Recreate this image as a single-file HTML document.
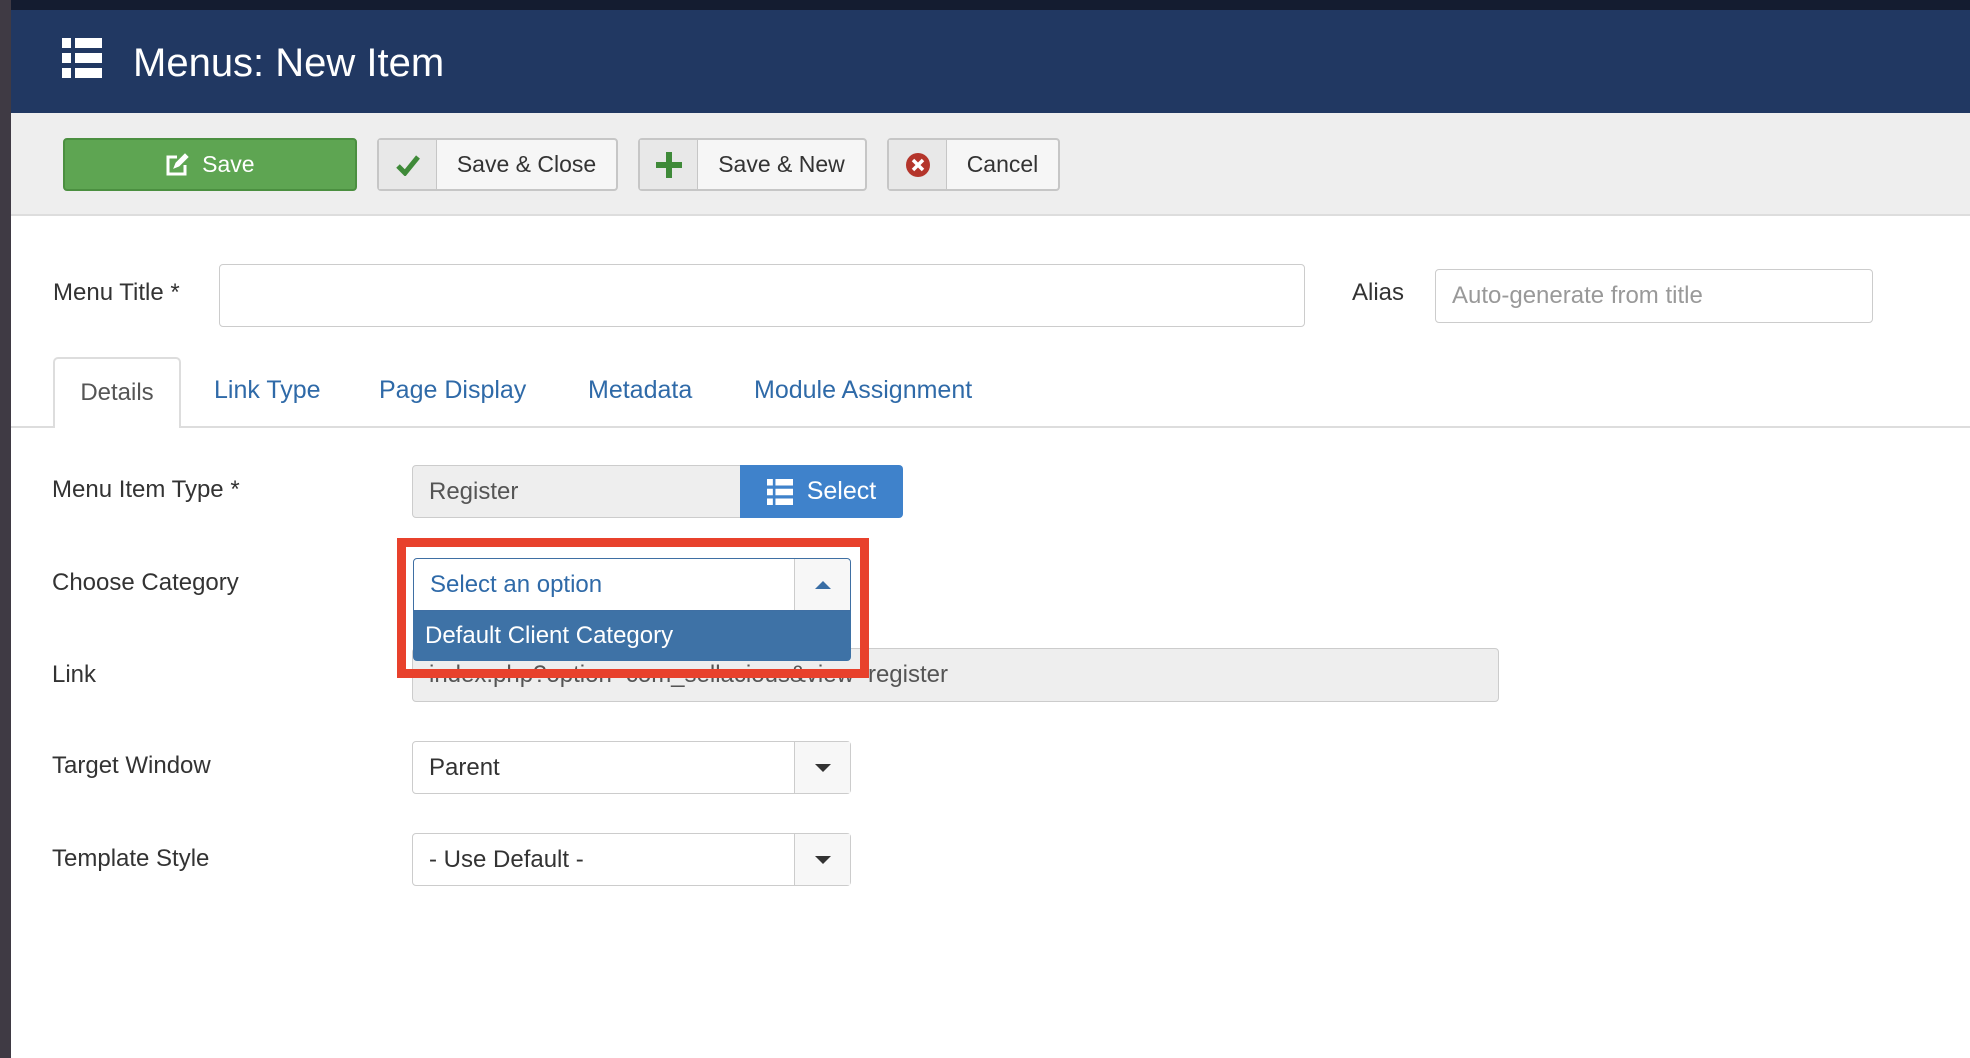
<!DOCTYPE html>
<html><head><meta charset="utf-8"><style>
*{box-sizing:border-box;margin:0;padding:0}
body{width:1970px;height:1058px;overflow:hidden;background:#fff;font-family:"Liberation Sans",sans-serif;position:relative;color:#333}
.a{position:absolute}
.lbl{position:absolute;font-size:24px;color:#333;line-height:30px}
.btn{position:absolute;top:138px;height:53px;border:2px solid #c6c6c6;border-radius:4px;background:#f6f6f6;font-size:23px;color:#333;display:flex;align-items:center}
.btn .ic{width:58px;height:100%;background:#e8e8e8;border-right:1px solid #c6c6c6;display:flex;align-items:center;justify-content:center}
.btn .tx{flex:1;text-align:center}
.inp{position:absolute;border:1px solid #ccc;border-radius:4px;background:#fff;font-size:24px;display:flex;align-items:center;padding-left:16px}
.sel .arr{position:absolute;right:0;top:0;bottom:0;width:56px;border-left:1px solid #ccc;background:#f7f7f7;display:flex;align-items:center;justify-content:center}
.tab{position:absolute;top:376px;font-size:25px;color:#2f6aa8}
</style></head><body>
<div class="a" style="left:0;top:0;width:1970px;height:10px;background:#141c30"></div>
<div class="a" style="left:0;top:0;width:11px;height:1058px;background:#3f3a44"></div>
<div class="a" style="left:11px;top:10px;width:1959px;height:103px;background:#213862"></div>
<svg class="a" style="left:62px;top:38px" width="40" height="40" viewBox="0 0 40 40" fill="#fff"><rect x="0" y="0" width="9" height="10"/><rect x="13" y="0" width="27" height="10"/><rect x="0" y="15" width="9" height="10"/><rect x="13" y="15" width="27" height="10"/><rect x="0" y="30" width="9" height="10"/><rect x="13" y="30" width="27" height="10"/></svg>
<div class="a" style="left:133px;top:39px;font-size:40px;color:#fff;line-height:48px">Menus: New Item</div>
<div class="a" style="left:11px;top:113px;width:1959px;height:103px;background:#eeeeee;border-bottom:2px solid #ddd"></div>
<div class="btn" style="left:63px;width:294px;background:#5ea552;border-color:#4b8f40;color:#fff;justify-content:center"><svg width="24" height="24" viewBox="0 0 24 24" fill="none" stroke="#fff" stroke-width="3"><path d="M12 4H3v17h17v-9"/><path d="M9 15l2-5 9-9 3 3-9 9z" fill="#fff" stroke-width="1"/></svg>&nbsp;&nbsp;Save</div>
<div class="btn" style="left:377px;width:241px"><div class="ic"><svg width="24" height="22" viewBox="0 0 24 22"><path d="M2 12l7 7L22 3" fill="none" stroke="#3f8a39" stroke-width="5"/></svg></div><div class="tx">Save &amp; Close</div></div>
<div class="btn" style="left:638px;width:229px"><div class="ic"><svg width="26" height="26" viewBox="0 0 26 26" fill="#3f8a39"><rect x="10" y="0" width="6" height="26"/><rect x="0" y="10" width="26" height="6"/></svg></div><div class="tx">Save &amp; New</div></div>
<div class="btn" style="left:887px;width:173px"><div class="ic"><svg width="26" height="26" viewBox="0 0 26 26"><circle cx="13" cy="13" r="12" fill="#b4352b"/><path d="M8 8l10 10M18 8L8 18" stroke="#fff" stroke-width="3.5"/></svg></div><div class="tx">Cancel</div></div>

<div class="lbl" style="left:53px;top:278px">Menu Title *</div>
<div class="inp" style="left:219px;top:264px;width:1086px;height:63px"></div>
<div class="lbl" style="left:1352px;top:278px">Alias</div>
<div class="inp" style="left:1435px;top:269px;width:438px;height:54px;color:#999">Auto-generate from title</div>

<div class="a" style="left:11px;top:426px;width:1959px;height:2px;background:#ddd"></div>
<div class="a" style="left:53px;top:357px;width:128px;height:71px;border:2px solid #ddd;border-bottom:none;background:#fff;border-radius:5px 5px 0 0;font-size:24px;color:#555;text-align:center;line-height:68px">Details</div>
<div class="tab" style="left:214px">Link Type</div>
<div class="tab" style="left:379px">Page Display</div>
<div class="tab" style="left:588px">Metadata</div>
<div class="tab" style="left:754px">Module Assignment</div>

<div class="lbl" style="left:52px;top:475px">Menu Item Type *</div>
<div class="inp" style="left:412px;top:465px;width:330px;height:53px;background:#eee;color:#555;border-radius:4px 0 0 4px">Register</div>
<div class="a" style="left:740px;top:465px;width:163px;height:53px;background:#3f82cb;border-radius:0 4px 4px 0;color:#fff;font-size:25px;display:flex;align-items:center;justify-content:center"><svg width="26" height="26" viewBox="0 0 40 40" fill="#fff"><rect x="0" y="0" width="9" height="10"/><rect x="13" y="0" width="27" height="10"/><rect x="0" y="15" width="9" height="10"/><rect x="13" y="15" width="27" height="10"/><rect x="0" y="30" width="9" height="10"/><rect x="13" y="30" width="27" height="10"/></svg>&nbsp;&nbsp;Select</div>

<div class="lbl" style="left:52px;top:568px">Choose Category</div>
<div class="lbl" style="left:52px;top:660px">Link</div>
<div class="inp" style="left:412px;top:648px;width:1087px;height:54px;background:#eee;color:#555">index.php?option=com_sellacious&amp;view=register</div>
<div class="inp sel" style="left:413px;top:558px;width:438px;height:53px;border-color:#3f6fa3;border-radius:4px 4px 0 0;color:#2f6aa8"><span>Select an option</span><div class="arr" style="width:56px;border-radius:0 4px 0 0"><svg width="16" height="10"><path d="M0 9L8 1l8 8z" fill="#3a6ea5"/></svg></div></div>
<div class="a" style="left:413px;top:611px;width:438px;height:50px;background:#3e72a6;color:#fff;font-size:24px;line-height:50px;padding-left:12px;border-radius:0 0 4px 4px">Default Client Category</div>
<div class="a" style="left:397px;top:538px;width:472px;height:140px;border:9px solid #e8412c"></div>

<div class="lbl" style="left:52px;top:751px">Target Window</div>
<div class="inp sel" style="left:412px;top:741px;width:439px;height:53px">Parent<div class="arr"><svg width="16" height="10"><path d="M0 1h16L8 9z" fill="#333"/></svg></div></div>
<div class="lbl" style="left:52px;top:844px">Template Style</div>
<div class="inp sel" style="left:412px;top:833px;width:439px;height:53px">- Use Default -<div class="arr"><svg width="16" height="10"><path d="M0 1h16L8 9z" fill="#333"/></svg></div></div>
</body></html>
